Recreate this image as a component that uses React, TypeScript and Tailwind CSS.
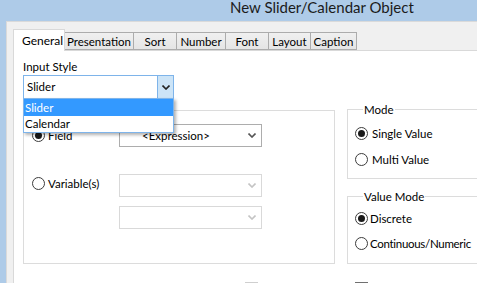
import React from "react";

const TABS = [
  { label: "General", w: "w-[52px]", selected: true },
  { label: "Presentation", w: "w-[69px]" },
  { label: "Sort", w: "w-[43px]" },
  { label: "Number", w: "w-[49px]" },
  { label: "Font", w: "w-[43px]" },
  { label: "Layout", w: "w-[42px]" },
  { label: "Caption", w: "w-[46px]" },
];

function Chevron({ color = "#333" }: { color?: string }) {
  return (
    <svg width="8" height="5" viewBox="0 0 8 5">
      <polyline points="0.5,0.5 4,4 7.5,0.5" fill="none" stroke={color} strokeWidth="1.6" />
    </svg>
  );
}

function Radio({ checked = false }: { checked?: boolean }) {
  return (
    <span className="w-[13px] h-[13px] rounded-full border border-[#3c3c3c] bg-white flex items-center justify-center shrink-0">
      {checked && <span className="w-[7px] h-[7px] rounded-full bg-[#1a1a1a]" />}
    </span>
  );
}

function Combo({ text, disabled = false }: { text?: string; disabled?: boolean }) {
  return (
    <div
      className={`w-[143px] h-[23px] border flex items-center bg-white ${
        disabled ? "border-[#d9d9d9]" : "border-[#adadad]"
      }`}
    >
      <span className="flex-1 pl-[22px] leading-[21px]">{text}</span>
      <span className="w-[17px] flex justify-center pr-[2px]">
        <Chevron color={disabled ? "#c4c4c4" : "#555"} />
      </span>
    </div>
  );
}

export default function App() {
  return (
    <div className="w-[477px] h-[283px] overflow-hidden flex flex-col bg-[#aecbe8] font-['Lato',sans-serif] text-[11.5px] text-black">
      {/* Title bar */}
      <div className="h-[21px] shrink-0 pl-[230px] text-[15px] leading-[14px] text-[#1b1b1b]">
        New Slider/Calendar Object
      </div>

      <div className="flex-1 flex min-h-0">
        <div className="w-[6px] shrink-0" />
        <div className="flex-1 flex flex-col bg-[#f0f0f0] border-l border-t border-[#dadada] pl-[6px] pt-[7px]">
          {/* Tabs */}
          <div className="flex items-end h-[21px] shrink-0">
            {TABS.map((t) =>
              t.selected ? (
                <div
                  key={t.label}
                  className={`${t.w} h-[22px] -mb-px relative z-10 bg-white border border-b-0 border-[#d9d9d9] pl-[8px] pt-[3px] leading-[15px] text-[12px]`}
                >
                  {t.label}
                </div>
              ) : (
                <div
                  key={t.label}
                  className={`${t.w} h-[18px] border border-l-0 border-[#acacac] bg-gradient-to-b from-[#f0f0f0] to-[#e5e5e5] flex justify-center items-center leading-[15px]`}
                >
                  {t.label}
                </div>
              )
            )}
          </div>

          {/* Tab panel */}
          <div className="flex-1 bg-white border-l border-t border-[#d9d9d9] pl-[9px] pt-[8px]">
            <div className="leading-[15px]">Input Style</div>
            <div className="relative mt-[1px] w-[151px] h-[24px] border border-[#7eb4ea] flex">
              <span className="flex-1 pl-[3px] leading-[22px]">Slider</span>
              <span className="w-[16px] bg-[#cce4f7] border-l border-[#7eb4ea] flex items-center justify-center">
                <Chevron color="#222" />
              </span>
              <div className="absolute top-full -left-px w-[151px] bg-white border border-[#7eb4ea] shadow-[2px_2px_3px_rgba(0,0,0,0.3)] z-20">
                <div className="h-[17px] leading-[17px] pl-[1px] bg-[#3399ff] text-white">Slider</div>
                <div className="h-[16px] leading-[16px] pl-[1px]">Calendar</div>
              </div>
            </div>

            <div className="flex gap-[12px] mt-[3px]">
              {/* Field / Variable group */}
              <div className="mt-[8px] w-[312px] h-[154px] border border-[#dcdcdc] pl-[8px] pt-[13px]">
                <div className="flex items-center h-[23px]">
                  <div className="w-[87px] flex items-center gap-[3px]">
                    <Radio checked />
                    <span>Field</span>
                  </div>
                  <Combo text="<Expression>" />
                </div>
                <div className="flex mt-[27px]">
                  <div className="w-[87px] h-[23px] flex items-center gap-[3px] -mt-[2px]">
                    <Radio />
                    <span>Variable(s)</span>
                  </div>
                  <div className="flex flex-col gap-[9px]">
                    <Combo disabled />
                    <Combo disabled />
                  </div>
                </div>
              </div>

              {/* Right column */}
              <div className="flex flex-col">
                <fieldset className="w-[140px] h-[77px] border border-[#dcdcdc] pl-[7px]">
                  <legend className="ml-[8px] px-[1px] leading-[15px]">Mode</legend>
                  <div className="flex flex-col gap-[11px] mt-[9px]">
                    <label className="flex items-center gap-[4px] h-[15px]">
                      <Radio checked />
                      <span>Single Value</span>
                    </label>
                    <label className="flex items-center gap-[4px] h-[15px]">
                      <Radio />
                      <span>Multi Value</span>
                    </label>
                  </div>
                </fieldset>
                <fieldset className="mt-[10px] w-[140px] h-[75px] border border-[#dcdcdc] pl-[7px]">
                  <legend className="ml-[8px] px-[1px] leading-[15px]">Value Mode</legend>
                  <div className="flex flex-col gap-[10px] mt-[7px]">
                    <label className="flex items-center gap-[2px] h-[15px]">
                      <Radio checked />
                      <span>Discrete</span>
                    </label>
                    <label className="flex items-center gap-[2px] h-[15px] tracking-[-0.3px]">
                      <Radio />
                      <span>Continuous/Numeric</span>
                    </label>
                  </div>
                </fieldset>
              </div>
            </div>

            {/* Bottom row (cut off) */}
            <div className="flex items-start mt-[16px] pl-[9px]">
              <span className="w-[107px] leading-[15px]">Min Value</span>
              <span className="w-[106px] leading-[15px]">Max Value</span>
              <span className="w-[13px] h-[13px] mt-[2px] border border-[#cfcfcf] bg-[#f4f4f4]" />
              <span className="w-[97px]" />
              <span className="w-[13px] h-[13px] mt-[2px] border border-[#707070] bg-white" />
            </div>
          </div>
        </div>
      </div>
    </div>
  );
}
